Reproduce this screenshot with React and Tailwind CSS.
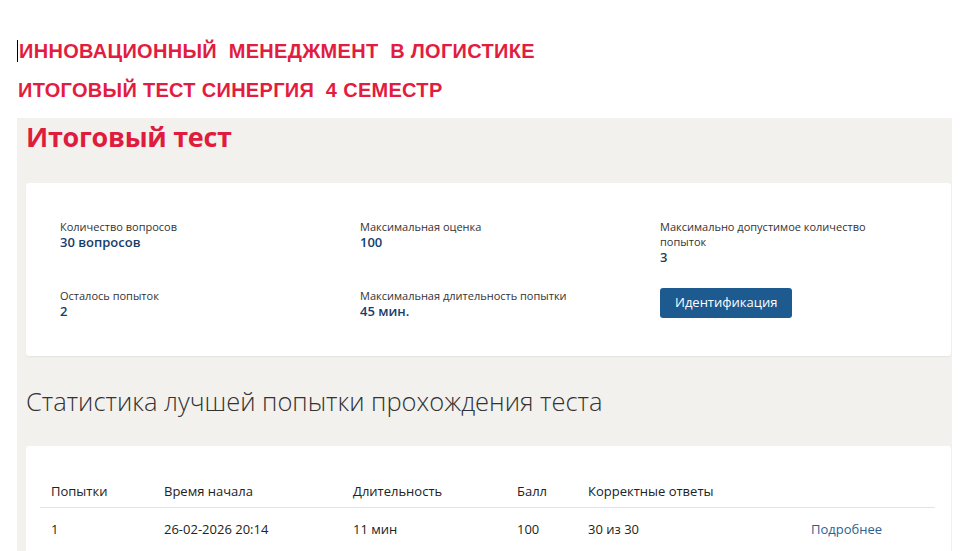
import React from "react";

const info = [
  { label: "Количество вопросов", value: "30 вопросов" },
  { label: "Максимальная оценка", value: "100" },
  { label: "Максимально допустимое количество попыток", value: "3", narrow: true },
  { label: "Осталось попыток", value: "2" },
  { label: "Максимальная длительность попытки", value: "45 мин." },
];

const columns = ["Попытки", "Время начала", "Длительность", "Балл", "Корректные ответы", ""];
const row = ["1", "26-02-2026 20:14", "11 мин", "100", "30 из 30"];

function InfoItem({ label, value, narrow }) {
  return (
    <div>
      <div className={`text-[11px] leading-[15px] text-[#333333] ${narrow ? "w-[212px]" : ""}`}>
        {label}
      </div>
      <div className="text-[13px] leading-[17px] font-semibold text-[#173d69]">{value}</div>
    </div>
  );
}

export default function App() {
  return (
    <div
      className="w-[979px] h-[551px] bg-white overflow-hidden"
      style={{ fontFamily: '"Open Sans", "Noto Sans", sans-serif' }}
    >
      {/* Page header */}
      <div
        className="pl-[17px] pt-[40px] h-[118px] text-[#e21d3f] font-bold text-[20px] tracking-[0.3px]"
        style={{ fontFamily: '"Liberation Sans", Arial, sans-serif' }}
      >
        <div className="flex items-center h-[22px] leading-[22px]">
          <span className="inline-block w-[1px] h-[22px] bg-black mr-[1px]" />
          <span className="whitespace-pre">ИННОВАЦИОННЫЙ  МЕНЕДЖМЕНТ  В ЛОГИСТИКЕ</span>
        </div>
        <div className="mt-[17px] pl-[1px] leading-[22px] whitespace-pre">
          ИТОГОВЫЙ ТЕСТ СИНЕРГИЯ  4 СЕМЕСТР
        </div>
      </div>

      {/* Gray panel */}
      <div className="ml-[17px] w-[935px] h-[433px] bg-[#f2f1ee] pl-[9px] pr-[1px]">
        <h1 className="h-[65px] text-[27px] leading-[37px] font-bold text-[#e01c3e] tracking-[-0.3px]">
          Итоговый тест
        </h1>

        {/* Info card */}
        <div className="bg-white rounded-[3px] shadow-[0_1px_2px_rgba(0,0,0,0.06)] pt-[36px] pb-[36px] pl-[34px]">
          <div className="grid grid-cols-[300px_300px_1fr] gap-y-[22px] items-start">
            {info.map((it) => (
              <InfoItem key={it.label} {...it} />
            ))}
            <div>
              <button className="h-[30px] px-[15px] rounded-[3px] bg-[#1d5a90] text-white text-[13px] font-medium">
                Идентификация
              </button>
            </div>
          </div>
        </div>

        <h2 className="mt-[29px] h-[61px] text-[25.5px] leading-[32px] font-light text-[#333333]">
          Статистика лучшей попытки прохождения теста
        </h2>

        {/* Stats card */}
        <div className="bg-white rounded-[3px] h-[120px] pt-[32px] pl-[14px] pr-[16px]">
          <div className="grid grid-cols-[113px_189px_164px_71px_223px_1fr] text-[13px] text-[#222222]">
            {columns.map((c, i) => (
              <div key={i} className="pl-[11px] h-[30px] leading-[26px] font-medium border-b border-[#e4e4e4]">
                {c}
              </div>
            ))}
            {row.map((c, i) => (
              <div key={i} className="pl-[11px] pt-[12px] leading-[18px]">
                {c}
              </div>
            ))}
            <div className="pl-[11px] pt-[12px] leading-[18px] text-[#2c5f92]">Подробнее</div>
          </div>
        </div>
      </div>
    </div>
  );
}
